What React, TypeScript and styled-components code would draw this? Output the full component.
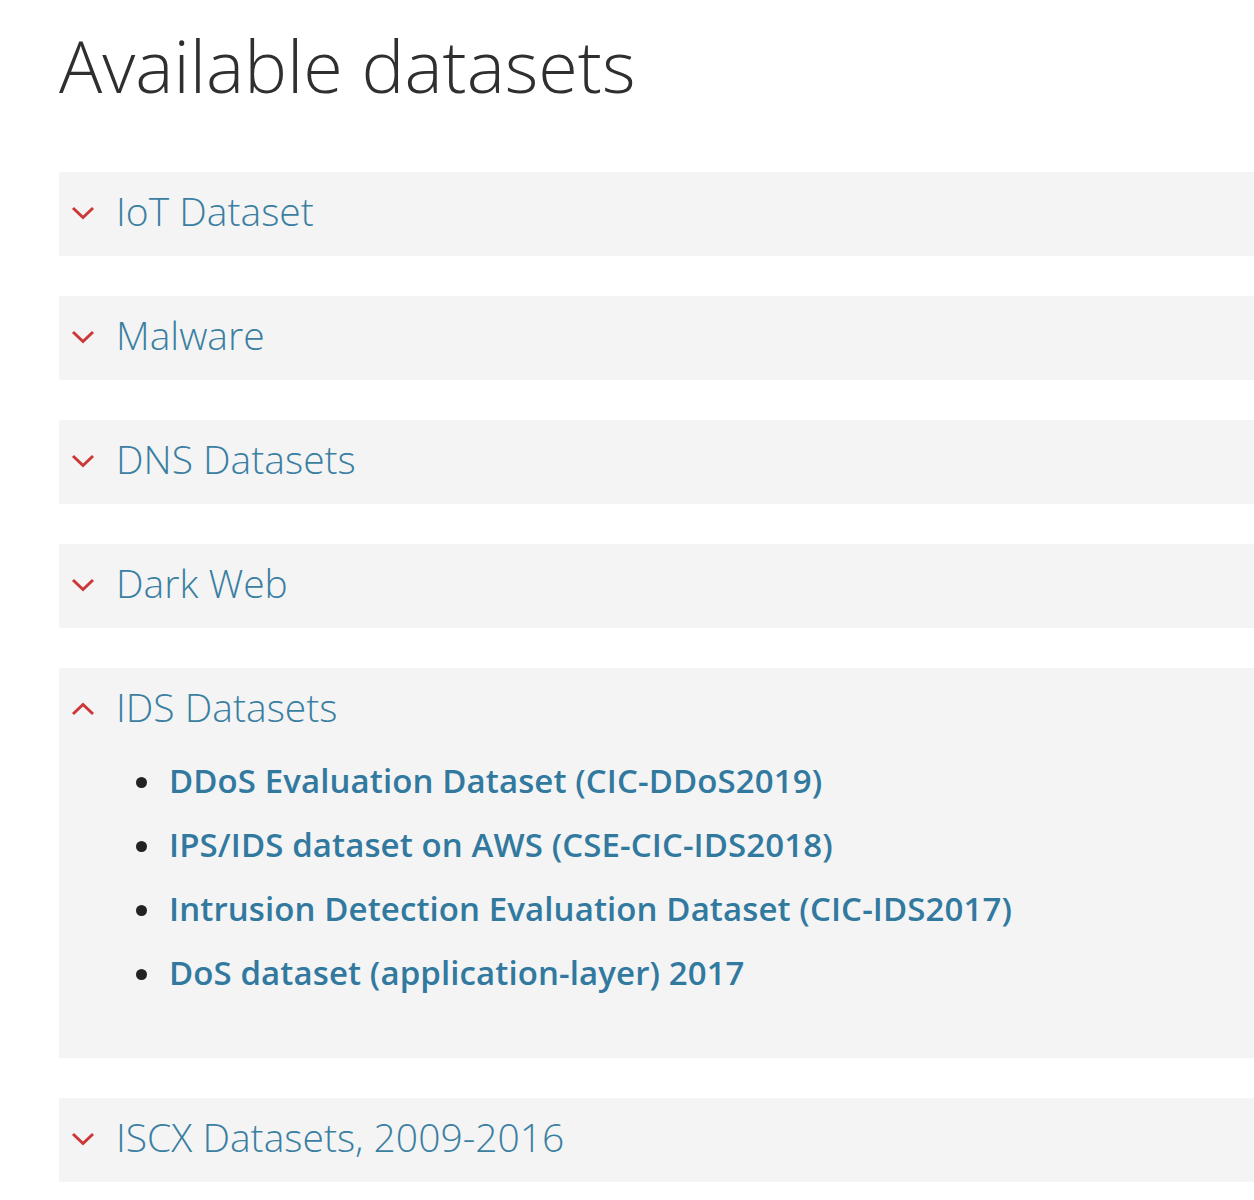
import React from "react";
import styled, { createGlobalStyle } from "styled-components";

const Global = createGlobalStyle`
  html, body { margin: 0; padding: 0; background: #fff; }
  body { font-family: "Open Sans", sans-serif; overflow-x: hidden; }
`;

const Page = styled.main`
  padding: 15px 0 40px 59px;
`;

const Heading = styled.h1`
  margin: 0 0 57px 0;
  font-family: "Open Sans", sans-serif;
  font-weight: 300;
  font-size: 72px;
  line-height: 100px;
  color: #2f2f2f;
`;

const Accordion = styled.div`
  display: flex;
  flex-direction: column;
  gap: 40px;
`;

const Panel = styled.section`
  background: #f4f4f4;
`;

const Header = styled.div`
  height: 84px;
  display: flex;
  align-items: center;
  gap: 21px;
  padding-left: 12px;
  box-sizing: border-box;
`;

const Title = styled.span`
  font-family: "Open Sans", sans-serif;
  font-weight: 300;
  font-size: 39px;
  color: #3a7fa2;
  line-height: 1;
  padding-bottom: 8px;
`;

const Chevron = styled.svg`
  width: 24px;
  height: 14px;
  flex: none;
  margin-bottom: 2px;
`;

const List = styled.ul`
  margin: -3px 0 0 0;
  padding: 0 0 53px 77px;
  list-style: none;
`;

const Item = styled.li`
  display: flex;
  align-items: center;
  gap: 22px;
  font-family: "Open Sans", sans-serif;
  font-weight: 600;
  font-size: 33px;
  letter-spacing: 0.1px;
  line-height: 64px;
  &::before {
    content: "";
    width: 11px;
    height: 11px;
    border-radius: 50%;
    background: #222;
    flex: none;
    margin-top: 2px;
  }
`;

const Link = styled.a`
  color: #3279a0;
  text-decoration: none;
`;

const Down = () => (
  <Chevron viewBox="0 0 24 14">
    <path d="M2 2 L12 11.5 L22 2" fill="none" stroke="#cc3838" strokeWidth="3" />
  </Chevron>
);
const Up = () => (
  <Chevron viewBox="0 0 24 14">
    <path d="M2 12 L12 2.5 L22 12" fill="none" stroke="#cc3838" strokeWidth="3" />
  </Chevron>
);

const panels = [
  { title: "IoT Dataset" },
  { title: "Malware" },
  { title: "DNS Datasets" },
  { title: "Dark Web" },
  {
    title: "IDS Datasets",
    items: [
      "DDoS Evaluation Dataset (CIC-DDoS2019)",
      "IPS/IDS dataset on AWS (CSE-CIC-IDS2018)",
      "Intrusion Detection Evaluation Dataset (CIC-IDS2017)",
      "DoS dataset (application-layer) 2017",
    ],
  },
  { title: "ISCX Datasets, 2009-2016" },
];

export default function App() {
  return (
    <>
      <Global />
      <Page>
        <Heading>Available datasets</Heading>
        <Accordion>
          {panels.map((p) => (
            <Panel key={p.title}>
              <Header>
                {p.items ? <Up /> : <Down />}
                <Title>{p.title}</Title>
              </Header>
              {p.items && (
                <List>
                  {p.items.map((it) => (
                    <Item key={it}>
                      <Link href="#">{it}</Link>
                    </Item>
                  ))}
                </List>
              )}
            </Panel>
          ))}
        </Accordion>
      </Page>
    </>
  );
}
